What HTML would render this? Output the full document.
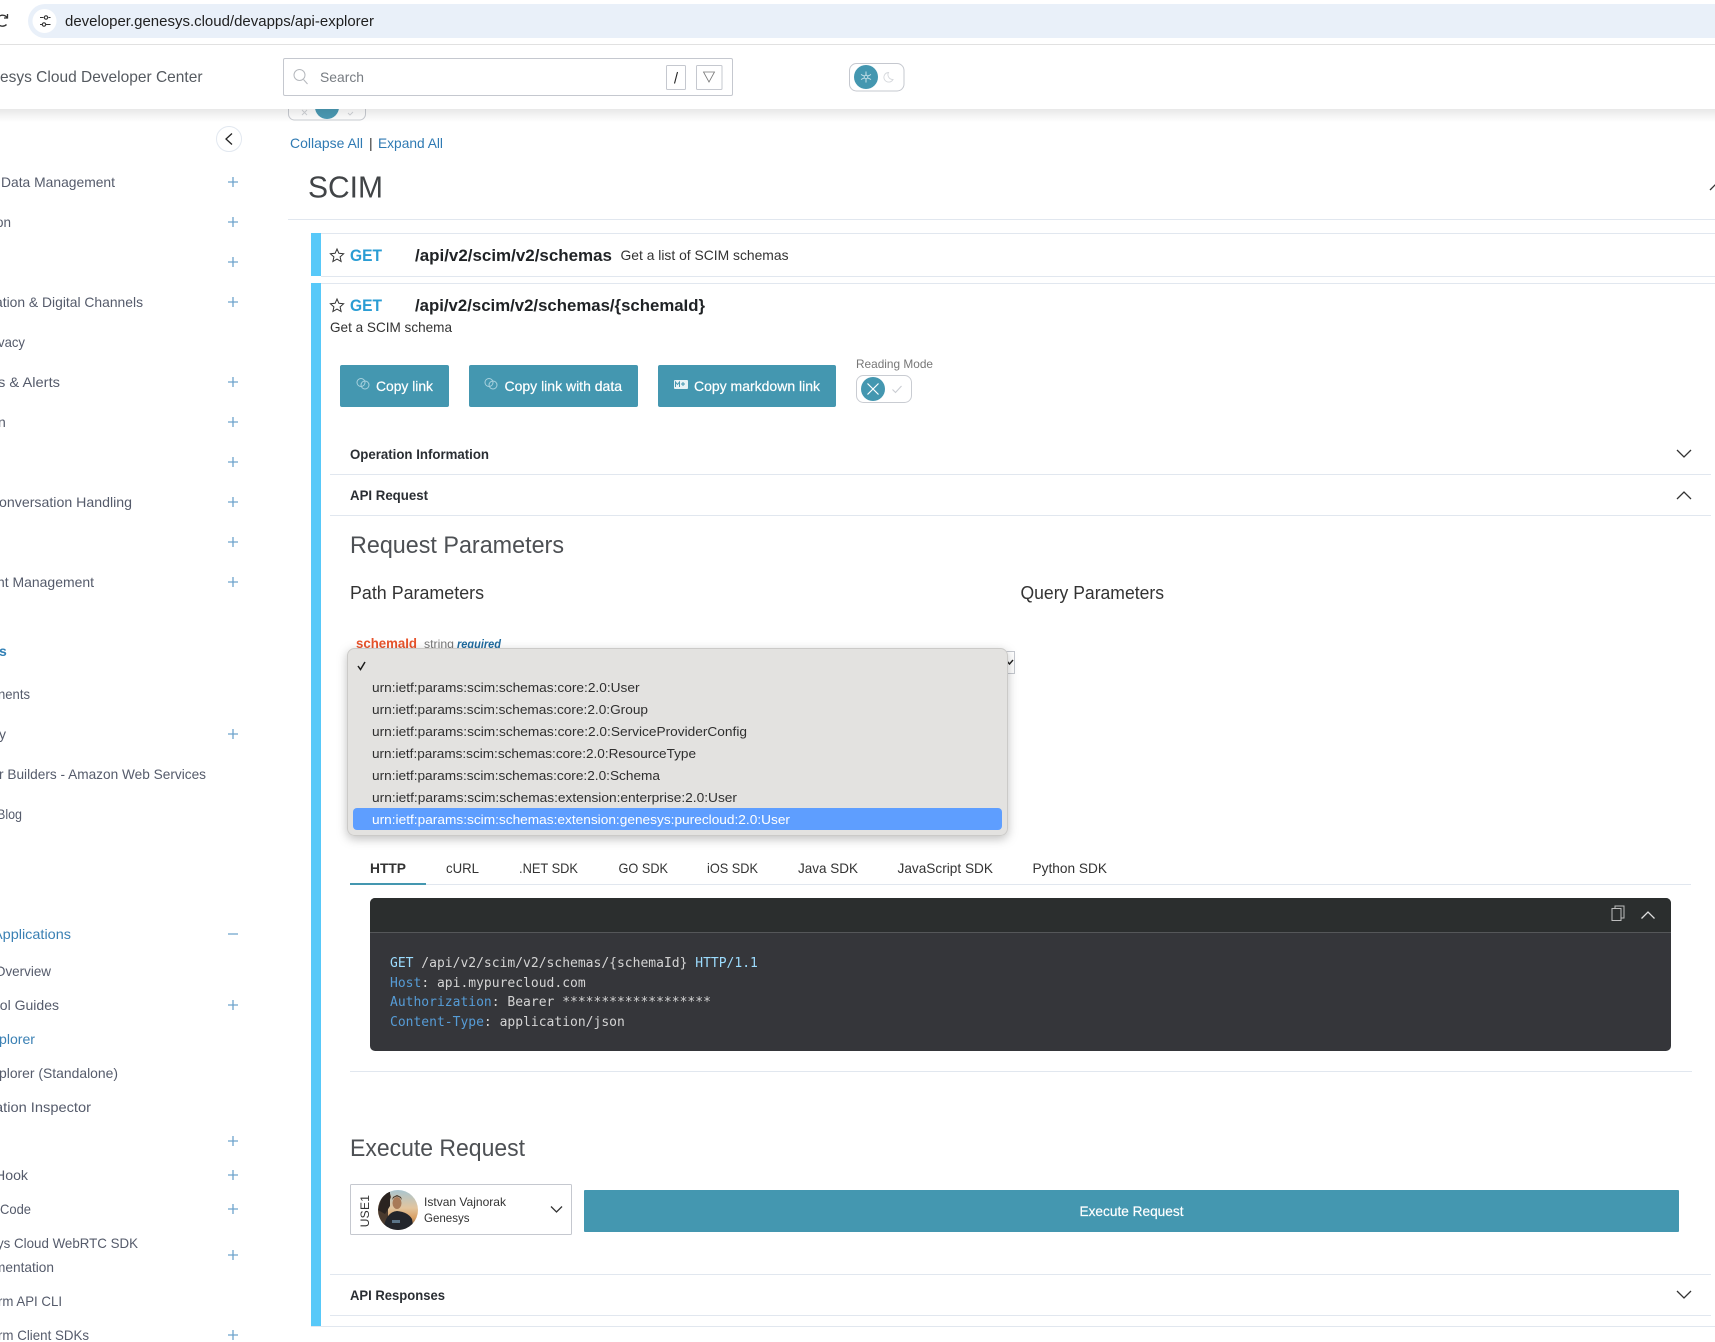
<!DOCTYPE html>
<html lang="en">
<head>
<meta charset="utf-8">
<title>API Explorer</title>
<style>
html,body{margin:0;padding:0;background:#fff;width:1715px;height:1342px;overflow:hidden}
svg{display:block;position:absolute;left:0;top:0}
text{font-family:"Liberation Sans",sans-serif;white-space:pre}
.nav{font-size:14px;fill:#555b6b}
.plus{stroke:#6ea3cc;stroke-width:1.3;fill:none}
.blue{fill:#3a80b4}
.dark{font-weight:bold;fill:#2a2e33;font-size:14px}
.opt{font-size:13px;fill:#2f2f2f}
.tab{font-size:14px;fill:#333}
.chev{stroke:#333;stroke-width:1.3;fill:none}
.btn{font-size:14px;fill:#fff;stroke:#fff;stroke-width:.2}
.mono{font-family:"DejaVu Sans Mono","Liberation Mono",monospace;font-size:13px;fill:#d4d4d4}
.ln{fill:#e1e7ef}
.get{font-weight:bold;font-size:17px;fill:#2a9dd4}
.path{font-weight:bold;font-size:17px;fill:#1f2225}
.h2{font-size:24px;fill:#4d5054}
</style>
</head>
<body>
<svg width="1715" height="1342" viewBox="0 0 1715 1342" xmlns="http://www.w3.org/2000/svg">
<defs>
<linearGradient id="sh" x1="0" y1="0" x2="0" y2="1"><stop offset="0" stop-color="#000" stop-opacity=".09"/><stop offset="1" stop-color="#000" stop-opacity="0"/></linearGradient>
<filter id="ds" x="-5%" y="-15%" width="110%" height="130%"><feDropShadow dx="0" dy="3" stdDeviation="5" flood-color="#000" flood-opacity=".25"/></filter>
<clipPath id="av"><circle cx="398" cy="1210" r="20"/></clipPath>
<linearGradient id="sky" x1="0" y1="0" x2="0" y2="1"><stop offset="0" stop-color="#a9c5cf"/><stop offset=".45" stop-color="#e3c59e"/><stop offset=".7" stop-color="#d99f63"/><stop offset="1" stop-color="#5c4a3c"/></linearGradient>
</defs>
<rect width="1715" height="1342" fill="#fff"/>

<!-- partial toggle under header -->
<rect x="288.500" y="92" width="77" height="28" rx="6" fill="#fff" stroke="#c9ccd2"/>
<circle cx="327" cy="107" r="12" fill="#4b9bb5"/>
<path d="M302 110l5 5M307 110l-5 5" stroke="#d0d3d7" stroke-width=".9"/>
<path d="M348 113l2 2 3-3" fill="none" stroke="#d0d3d7" stroke-width=".9"/>

<!-- sidebar -->
<g class="nav">
<text x="1" y="187" class="nav" textLength="114" lengthAdjust="spacingAndGlyphs">Data Management</text>
<text x="-4" y="227" class="nav" textLength="15" lengthAdjust="spacingAndGlyphs">on</text>
<text x="-5" y="307" class="nav" textLength="148" lengthAdjust="spacingAndGlyphs">ation &amp; Digital Channels</text>
<text x="-2" y="347" class="nav" textLength="27" lengthAdjust="spacingAndGlyphs">vacy</text>
<text x="-2" y="387" class="nav" textLength="62" lengthAdjust="spacingAndGlyphs">s &amp; Alerts</text>
<text x="-2" y="427" class="nav">n</text>
<text x="-1" y="507" class="nav" textLength="133" lengthAdjust="spacingAndGlyphs">onversation Handling</text>
<text x="-3" y="587" class="nav" textLength="97" lengthAdjust="spacingAndGlyphs">nt Management</text>
<text x="-1" y="656" style="font-size:14px;font-weight:bold;fill:#2f7fb5">s</text>
<text x="-2" y="699" class="nav" textLength="32" lengthAdjust="spacingAndGlyphs">nents</text>
<text x="-1" y="739" class="nav">y</text>
<text x="-1" y="779" class="nav" textLength="207" lengthAdjust="spacingAndGlyphs">r Builders - Amazon Web Services</text>
<text x="-3" y="819" class="nav" textLength="25" lengthAdjust="spacingAndGlyphs">Blog</text>
<text x="-7" y="939" class="nav blue" textLength="78" lengthAdjust="spacingAndGlyphs">Applications</text>
<text x="-5" y="976" class="nav" textLength="56" lengthAdjust="spacingAndGlyphs">Overview</text>
<text x="-8" y="1010" class="nav" textLength="67" lengthAdjust="spacingAndGlyphs">ool Guides</text>
<text x="-1" y="1044" class="nav blue" textLength="36" lengthAdjust="spacingAndGlyphs">plorer</text>
<text x="-1" y="1078" class="nav" textLength="119" lengthAdjust="spacingAndGlyphs">plorer (Standalone)</text>
<text x="-5" y="1112" class="nav" textLength="96" lengthAdjust="spacingAndGlyphs">ation Inspector</text>
<text x="-5" y="1180" class="nav" textLength="33" lengthAdjust="spacingAndGlyphs">Hook</text>
<text x="0" y="1214" class="nav" textLength="31" lengthAdjust="spacingAndGlyphs">Code</text>
<text x="-3" y="1248" class="nav" textLength="141" lengthAdjust="spacingAndGlyphs">ys Cloud WebRTC SDK</text>
<text x="-6" y="1272" class="nav" textLength="60" lengthAdjust="spacingAndGlyphs">mentation</text>
<text x="-2" y="1306" class="nav" textLength="64" lengthAdjust="spacingAndGlyphs">rm API CLI</text>
<text x="-2" y="1340" class="nav" textLength="91" lengthAdjust="spacingAndGlyphs">rm Client SDKs</text>
</g>
<path class="plus" d="M228 182h10M233 177v10M228 222h10M233 217v10M228 262h10M233 257v10M228 302h10M233 297v10M228 382h10M233 377v10M228 422h10M233 417v10M228 462h10M233 457v10M228 502h10M233 497v10M228 542h10M233 537v10M228 582h10M233 577v10M228 734h10M233 729v10M228 934h10M228 1005h10M233 1000v10M228 1141h10M233 1136v10M228 1175h10M233 1170v10M228 1209h10M233 1204v10M228 1255h10M233 1250v10M228 1335h10M233 1330v10"/>
<circle cx="229" cy="139" r="12.500" fill="#fff" stroke="#e2e8f0"/>
<path d="M232 133.500l-6 5.500 6 5.500" fill="none" stroke="#222" stroke-width="1.300"/>

<!-- top toolbar / links -->
<text x="290" y="148" font-size="14" fill="#2f7ab3" textLength="73" lengthAdjust="spacingAndGlyphs">Collapse All</text>
<text x="369" y="148" font-size="14" fill="#333">|</text>
<text x="378" y="148" font-size="14" fill="#2f7ab3" textLength="65" lengthAdjust="spacingAndGlyphs">Expand All</text>
<text x="308" y="197.500" font-size="31" fill="#414447" textLength="75" lengthAdjust="spacingAndGlyphs">SCIM</text>
<path d="M1710 190l7-7" stroke="#333" stroke-width="1.300" fill="none"/>
<rect x="288" y="219" width="1427" height="1" class="ln"/>

<!-- row 1 -->
<rect x="321" y="233" width="1394" height="1" class="ln"/>
<rect x="321" y="276" width="1394" height="1" class="ln"/>
<rect x="311" y="233" width="10" height="43" fill="#58c9f9"/>
<path d="M337 249l1.900 4.300 4.700.5-3.500 3.100 1 4.600-4.100-2.400-4.100 2.400 1-4.600-3.500-3.100 4.700-.5z" fill="none" stroke="#333" stroke-width="1"/>
<text x="350" y="261" class="get" textLength="32" lengthAdjust="spacingAndGlyphs">GET</text>
<text x="415" y="261" class="path" textLength="197" lengthAdjust="spacingAndGlyphs">/api/v2/scim/v2/schemas</text>
<text x="620.500" y="260" font-size="14" fill="#333" textLength="168" lengthAdjust="spacingAndGlyphs">Get a list of SCIM schemas</text>

<!-- row 2 -->
<rect x="321" y="283" width="1394" height="1" class="ln"/>
<rect x="311" y="283" width="10" height="1044" fill="#58c9f9"/>
<path d="M337 299l1.900 4.300 4.700.5-3.500 3.100 1 4.600-4.100-2.400-4.100 2.400 1-4.600-3.500-3.100 4.700-.5z" fill="none" stroke="#333" stroke-width="1"/>
<text x="350" y="311" class="get" textLength="32" lengthAdjust="spacingAndGlyphs">GET</text>
<text x="415" y="311" class="path" textLength="290" lengthAdjust="spacingAndGlyphs">/api/v2/scim/v2/schemas/{schemaId}</text>
<text x="330" y="332" font-size="14" fill="#333" textLength="122" lengthAdjust="spacingAndGlyphs">Get a SCIM schema</text>

<!-- buttons -->
<rect x="340" y="365" width="109" height="42" rx="2" fill="#4497b0"/>
<rect x="469" y="365" width="169" height="42" rx="2" fill="#4497b0"/>
<rect x="658" y="365" width="178" height="42" rx="2" fill="#4497b0"/>
<g fill="none" stroke="#a9d2de" stroke-width="1">
<circle cx="361" cy="382.500" r="4"/><circle cx="365" cy="385" r="4"/>
<circle cx="489" cy="382.500" r="4"/><circle cx="493" cy="385" r="4"/>
</g>
<rect x="674" y="380" width="14" height="9" rx="1" fill="#e8f3f6"/>
<path d="M675.500 387v-5l2 2.500 2-2.500v5M683 382v4M681 384h4" fill="none" stroke="#4497b0"/>
<text x="376" y="391" class="btn" textLength="57" lengthAdjust="spacingAndGlyphs">Copy link</text>
<text x="504.500" y="391" class="btn" textLength="117.500" lengthAdjust="spacingAndGlyphs">Copy link with data</text>
<text x="694" y="391" class="btn" textLength="126" lengthAdjust="spacingAndGlyphs">Copy markdown link</text>

<text x="856" y="368" font-size="12" fill="#777" textLength="77" lengthAdjust="spacingAndGlyphs">Reading Mode</text>
<rect x="856.500" y="375.500" width="55" height="27" rx="7" fill="#fff" stroke="#c9ccd2"/>
<circle cx="873" cy="389" r="12" fill="#4497b0"/>
<path d="M867.500 383.500l11 11M878.500 383.500l-11 11" stroke="#fff" stroke-width="1.200"/>
<path d="M892.500 389.500l3 3 6-6.500" fill="none" stroke="#c9ccd2" stroke-width="1.100"/>

<!-- accordions -->
<text x="350" y="459" class="dark" textLength="139" lengthAdjust="spacingAndGlyphs">Operation Information</text>
<rect x="330" y="474" width="1381" height="1" class="ln"/>
<path class="chev" d="M1677 450l7 7 7-7"/>
<text x="350" y="500" class="dark" textLength="78" lengthAdjust="spacingAndGlyphs">API Request</text>
<rect x="330" y="515" width="1381" height="1" class="ln"/>
<path class="chev" d="M1677 499l7-7 7 7"/>

<text x="350" y="553" class="h2" textLength="214" lengthAdjust="spacingAndGlyphs">Request Parameters</text>
<text x="350" y="599" font-size="18" fill="#333" textLength="134" lengthAdjust="spacingAndGlyphs">Path Parameters</text>
<text x="1020.500" y="599" font-size="18" fill="#333" textLength="143.500" lengthAdjust="spacingAndGlyphs">Query Parameters</text>

<!-- parameter label -->
<text x="356" y="648" font-size="14" font-weight="bold" fill="#e8532b" textLength="61" lengthAdjust="spacingAndGlyphs">schemaId</text>
<text x="424" y="648" font-size="12" fill="#777" textLength="30" lengthAdjust="spacingAndGlyphs">string</text>
<text x="457" y="648" font-size="12" font-weight="bold" font-style="italic" fill="#1e6a9e" textLength="44" lengthAdjust="spacingAndGlyphs">required</text>

<!-- select behind dropdown -->
<rect x="352.500" y="651.500" width="662" height="22" fill="#fff" stroke="#c5c8cf"/>
<path d="M1006 660l3.500 4 3.500-4" fill="none" stroke="#222" stroke-width="1.400"/>

<!-- dropdown -->
<rect x="347.500" y="648.500" width="660" height="187" rx="7" fill="#e3e2e0" stroke="#cbcac8" filter="url(#ds)"/>
<path d="M358 666l2.500 3.500 4.500-7.500" fill="none" stroke="#1c1c1c" stroke-width="1.500"/>
<rect x="353" y="808" width="649" height="22" rx="4" fill="#5e9eff"/>
<text x="372" y="692" class="opt" textLength="267.500" lengthAdjust="spacingAndGlyphs">urn:ietf:params:scim:schemas:core:2.0:User</text>
<text x="372" y="714" class="opt" textLength="276" lengthAdjust="spacingAndGlyphs">urn:ietf:params:scim:schemas:core:2.0:Group</text>
<text x="372" y="736" class="opt" textLength="375" lengthAdjust="spacingAndGlyphs">urn:ietf:params:scim:schemas:core:2.0:ServiceProviderConfig</text>
<text x="372" y="758" class="opt" textLength="324" lengthAdjust="spacingAndGlyphs">urn:ietf:params:scim:schemas:core:2.0:ResourceType</text>
<text x="372" y="780" class="opt" textLength="288" lengthAdjust="spacingAndGlyphs">urn:ietf:params:scim:schemas:core:2.0:Schema</text>
<text x="372" y="802" class="opt" textLength="365" lengthAdjust="spacingAndGlyphs">urn:ietf:params:scim:schemas:extension:enterprise:2.0:User</text>
<text x="372" y="824" class="opt" style="fill:#fff" textLength="418" lengthAdjust="spacingAndGlyphs">urn:ietf:params:scim:schemas:extension:genesys:purecloud:2.0:User</text>

<!-- tabs -->
<text x="370" y="873" class="tab" font-weight="bold" textLength="36" lengthAdjust="spacingAndGlyphs">HTTP</text>
<text x="446" y="873" class="tab" textLength="33" lengthAdjust="spacingAndGlyphs">cURL</text>
<text x="519" y="873" class="tab" textLength="59" lengthAdjust="spacingAndGlyphs">.NET SDK</text>
<text x="618.500" y="873" class="tab" textLength="49.500" lengthAdjust="spacingAndGlyphs">GO SDK</text>
<text x="707" y="873" class="tab" textLength="51" lengthAdjust="spacingAndGlyphs">iOS SDK</text>
<text x="798" y="873" class="tab" textLength="60" lengthAdjust="spacingAndGlyphs">Java SDK</text>
<text x="897.500" y="873" class="tab" textLength="95.500" lengthAdjust="spacingAndGlyphs">JavaScript SDK</text>
<text x="1032.500" y="873" class="tab" textLength="74.500" lengthAdjust="spacingAndGlyphs">Python SDK</text>
<rect x="350" y="884" width="1341" height="1" class="ln"/>
<rect x="350" y="883" width="76" height="2" fill="#4497b0"/>

<!-- code block -->
<rect x="370" y="898" width="1301" height="153" rx="5" fill="#35363a"/>
<path d="M370 932v-29a5 5 0 0 1 5-5h1291a5 5 0 0 1 5 5v29z" fill="#2b2e2e"/>
<rect x="370" y="932" width="1301" height="1" fill="#555759"/>
<g fill="none" stroke="#bdbdbd" stroke-width="1">
<rect x="1612" y="908.500" width="9" height="12"/>
<path d="M1615 908.500v-2.500h9v12h-3"/>
</g>
<path d="M1641.500 918.500l6.500-6.500 6.500 6.500" fill="none" stroke="#e0e0e0" stroke-width="1.300"/>
<text x="390" y="967" class="mono"><tspan fill="#9cdcfe">GET</tspan> /api/v2/scim/v2/schemas/{schemaId} <tspan fill="#9cdcfe">HTTP/1.1</tspan></text>
<text x="390" y="987" class="mono"><tspan fill="#569cd6">Host</tspan>: api.mypurecloud.com</text>
<text x="390" y="1006" class="mono"><tspan fill="#569cd6">Authorization</tspan>: Bearer *******************</text>
<text x="390" y="1026" class="mono"><tspan fill="#569cd6">Content-Type</tspan>: application/json</text>
<rect x="350" y="1071" width="1342" height="1" class="ln"/>

<!-- execute -->
<text x="350" y="1156" class="h2" textLength="175" lengthAdjust="spacingAndGlyphs">Execute Request</text>
<rect x="350.500" y="1184.500" width="221" height="50" rx="1" fill="#fff" stroke="#c5c8cf"/>
<text transform="translate(369 1211) rotate(-90)" text-anchor="middle" font-size="12" fill="#333" letter-spacing=".3">USE1</text>
<g clip-path="url(#av)">
<rect x="378" y="1190" width="40" height="40" fill="url(#sky)"/>
<path d="M378 1190h11l2 7-3 8v25h-10z" fill="#4a3a2e"/>
<path d="M384 1190l6 2v14l-5 8-7-4z" fill="#2a2320"/>
<ellipse cx="397" cy="1203" rx="4.500" ry="6" fill="#a87a58"/>
<path d="M392 1200q5-7 10 0l-1-3-4-2-4 2z" fill="#4a3524"/>
<path d="M383 1232q2-20 14-21 11 1 15 8l2 13z" fill="#23252b"/>
<path d="M392 1220h8v3h-8z" fill="#5b7488"/>
</g>
<text x="424" y="1206" font-size="12" fill="#333" textLength="82" lengthAdjust="spacingAndGlyphs">Istvan Vajnorak</text>
<text x="424" y="1222" font-size="12" fill="#333" textLength="45.500" lengthAdjust="spacingAndGlyphs">Genesys</text>
<path class="chev" d="M551 1206.500l5.500 5.500 5.500-5.500"/>
<rect x="584" y="1190" width="1095" height="42" rx="1" fill="#4497b0"/>
<text x="1079.500" y="1216" class="btn" textLength="104" lengthAdjust="spacingAndGlyphs">Execute Request</text>

<rect x="330" y="1274" width="1381" height="1" class="ln"/>
<text x="350" y="1300" class="dark" textLength="95" lengthAdjust="spacingAndGlyphs">API Responses</text>
<path class="chev" d="M1677 1291l7 7 7-7"/>
<rect x="330" y="1315" width="1381" height="1" class="ln"/>
<rect x="311" y="1326" width="1404" height="1" class="ln"/>

<!-- header -->
<rect x="0" y="44" width="1715" height="65" fill="#fff"/>
<rect x="0" y="109" width="1715" height="13" fill="url(#sh)"/>
<text x="0" y="82" font-size="16" fill="#555a60" textLength="202.500" lengthAdjust="spacingAndGlyphs">esys Cloud Developer Center</text>
<rect x="283.500" y="58.500" width="449" height="37" rx="1.500" fill="#fff" stroke="#c5c8cf"/>
<circle cx="299.500" cy="75" r="5.500" fill="none" stroke="#b5b8bd"/>
<path d="M303.500 79.500l4 4.500" stroke="#b5b8bd"/>
<text x="320" y="82" font-size="14" fill="#777c82" textLength="44" lengthAdjust="spacingAndGlyphs">Search</text>
<rect x="666.500" y="65.500" width="19" height="24" rx="1" fill="#fff" stroke="#c5c8cf"/>
<path d="M677.500 72l-3 11.500" stroke="#222" stroke-width="1.100"/>
<rect x="696.500" y="65.500" width="25.500" height="24" rx="1" fill="#fff" stroke="#c5c8cf"/>
<path d="M703.500 72h11l-5.500 10z" fill="none" stroke="#777" stroke-width=".8"/>
<rect x="849.500" y="63.500" width="54.500" height="27.500" rx="7" fill="#fff" stroke="#c5c8cf"/>
<circle cx="866" cy="77" r="12" fill="#4497b0"/>
<path d="M866 71.500v11M861 74.500l10 5M871 74.500l-10 5" stroke="#d5e9ef" stroke-width=".9"/>
<circle cx="866" cy="77" r="1.800" fill="#4497b0" stroke="#d5e9ef" stroke-width=".8"/>
<path d="M888.500 72.500a4.800 4.800 0 1 0 4.500 7 4.800 4.800 0 0 1-4.500-7z" fill="none" stroke="#d5d8dc" stroke-width=".9"/>

<!-- browser bar -->
<rect x="0" y="0" width="1715" height="44" fill="#fff"/>
<rect x="0" y="44" width="1715" height="1" fill="#e1e1e1"/>
<path d="M1715 4H45a17 17 0 0 0 0 34h1670z" fill="#e9f0f9"/>
<circle cx="44.500" cy="21" r="12" fill="#fff"/>
<path d="M40 17.500h3.500M48.500 17.500h2M40 24.500h2M46 24.500h4.500" stroke="#333" stroke-width="1.100"/>
<circle cx="46" cy="17.500" r="1.700" fill="none" stroke="#333" stroke-width="1.100"/>
<circle cx="44" cy="24.500" r="1.700" fill="none" stroke="#333" stroke-width="1.100"/>
<path d="M6.500 24.500a5.500 5.500 0 1 1 .5-7M7.500 14v4h-3.500" fill="none" stroke="#333" stroke-width="1.300"/>
<text x="65" y="26" font-size="14.500" fill="#1f1f1f" textLength="309" lengthAdjust="spacingAndGlyphs">developer.genesys.cloud/devapps/api-explorer</text>
</svg>
</body>
</html>
